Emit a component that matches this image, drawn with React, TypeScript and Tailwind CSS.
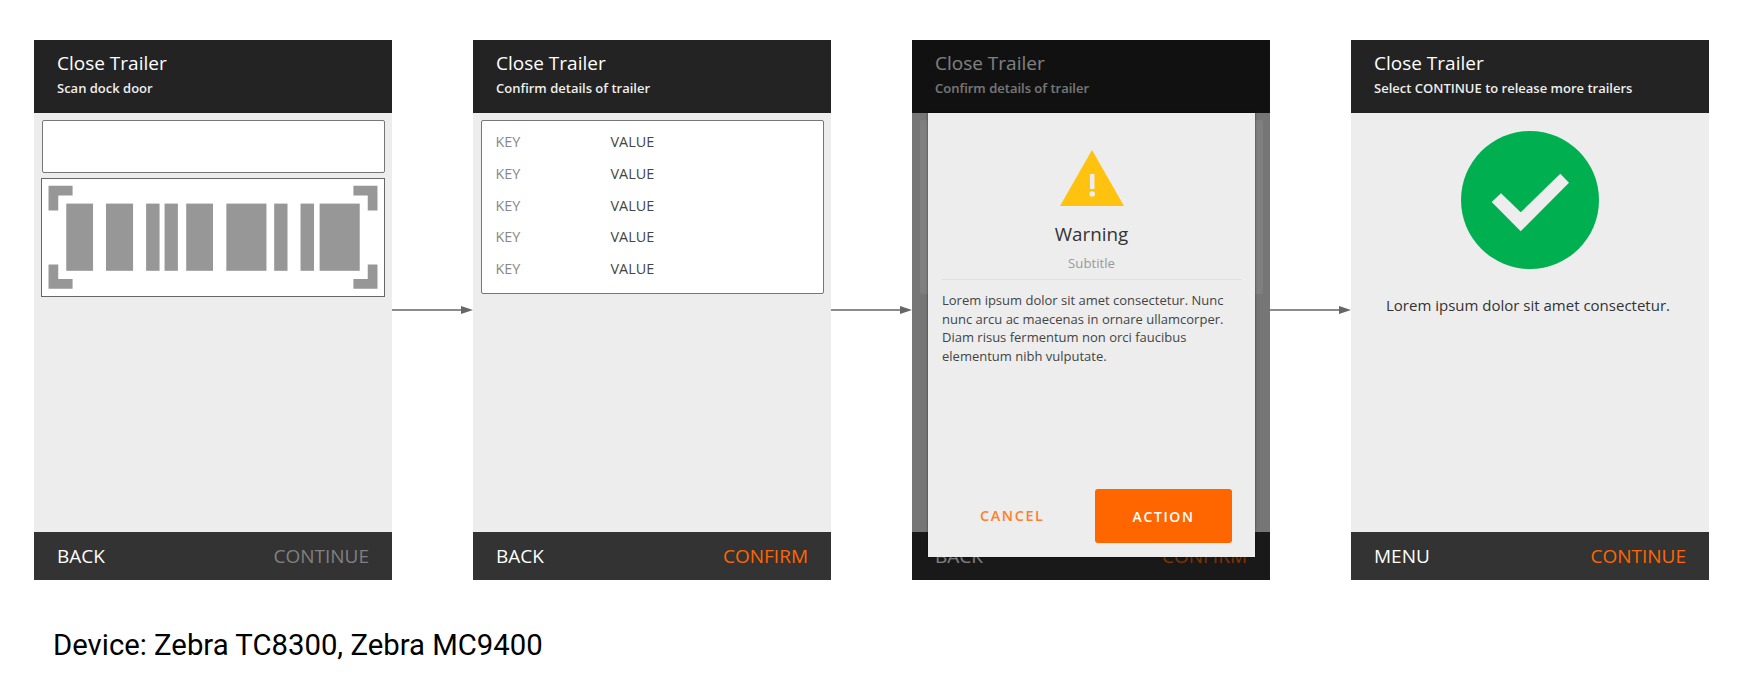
import type { ReactNode } from "react";

function Phone({
  subtitle,
  left,
  right,
  rightClass,
  children,
}: {
  subtitle: string;
  left: string;
  right: string;
  rightClass: string;
  children?: ReactNode;
}) {
  return (
    <div className="relative flex h-[540px] w-[358px] shrink-0 flex-col bg-[#ededed] font-['Open_Sans',sans-serif]">
      <div className="flex h-[73px] shrink-0 flex-col bg-[#232323] pl-[23px] text-white">
        <div className="mt-[10px] text-[19px] font-medium leading-[26px]">Close Trailer</div>
        <div className="mt-[3px] text-[13px] font-semibold leading-[18px] text-[#eeeeee]">{subtitle}</div>
      </div>
      <div className="flex min-h-0 flex-1 flex-col">{children}</div>
      <div className="flex h-[48px] shrink-0 items-center justify-between bg-[#333333] px-[23px] text-[19px] font-medium text-white">
        <span>{left}</span>
        <span className={rightClass}>{right}</span>
      </div>
    </div>
  );
}

function Arrow() {
  return (
    <svg className="mt-[265px] h-[10px] w-[81px] shrink-0" viewBox="0 0 81 10">
      <path d="M0 5H70" stroke="#666666" strokeWidth="1.5" />
      <path d="M69 1L81 5L69 9Z" fill="#666666" />
    </svg>
  );
}

function Barcode() {
  const bars = [
    [24.2, 26.7],
    [63.8, 27],
    [103.8, 13.4],
    [122.2, 13.3],
    [143.8, 26.7],
    [183.8, 40],
    [231.5, 13.3],
    [257.8, 13.4],
    [276.8, 40],
  ];
  return (
    <svg className="h-full w-full" viewBox="0 0 341 116">
      {bars.map(([x, w]) => (
        <rect key={x} x={x} y={24.2} width={w} height={67} fill="#979797" />
      ))}
      <path d="M6.5 6.5H30.5V16.2H16.2V31.2H6.5Z" fill="#979797" />
      <path d="M334.5 6.5H310.5V16.2H324.8V31.2H334.5Z" fill="#979797" />
      <path d="M6.5 109.2H30.5V99.5H16.2V84.8H6.5Z" fill="#979797" />
      <path d="M334.5 109.2H310.5V99.5H324.8V84.8H334.5Z" fill="#979797" />
    </svg>
  );
}

function KeyList() {
  return (
    <div className="mx-[7.5px] mt-[7px] h-[174px] rounded-[2px] border-[1.5px] border-[#777777] bg-white pl-[14px] pt-[5px] text-[14.4px]">
      {[0, 1, 2, 3, 4].map((row) => (
        <div key={row} className="flex h-[31.75px] items-center">
          <span className="w-[115px] text-[#888888]">KEY</span>
          <span className="text-[#444444]">VALUE</span>
        </div>
      ))}
    </div>
  );
}

export default function App() {
  return (
    <div className="h-[689px] w-[1746px] overflow-hidden bg-white pl-[34px] pt-[40px]">
      <div className="flex">
        <Phone subtitle="Scan dock door" left="BACK" right="CONTINUE" rightClass="text-[#808080]">
          <div className="mx-[7.5px] mt-[7px] h-[53px] rounded-[2px] border-[1.5px] border-[#777777] bg-white" />
          <div className="mx-[7px] mt-[5px] h-[119px] border-[1.5px] border-[#666666] bg-white">
            <Barcode />
          </div>
        </Phone>
        <Arrow />
        <Phone subtitle="Confirm details of trailer" left="BACK" right="CONFIRM" rightClass="text-[#ff6600]">
          <KeyList />
        </Phone>
        <Arrow />
        <Phone subtitle="Confirm details of trailer" left="BACK" right="CONFIRM" rightClass="text-[#ff6600]">
          {/* the list behind the dialog only shows as a lighter strip on both sides */}
          <div className="mx-[7.5px] mt-[7px] h-[174px] rounded-[2px] bg-white" />
          <div className="absolute inset-0 bg-black/50" />
          <div className="absolute left-[16px] top-[73px] flex h-[444px] w-[327px] flex-col items-center bg-[#ededed] px-[14px] shadow-[0_0_2px_rgba(0,0,0,0.6)]">
            <svg className="mt-[37px] h-[56px] w-[64px] shrink-0" viewBox="0 0 64 56">
              <path d="M32 0L64 56H0Z" fill="#ffc20e" />
              <path d="M30 24H34.5V39H30Z" fill="#ededed" />
              <circle cx="32.2" cy="44" r="2.8" fill="#ededed" />
            </svg>
            <div className="mt-[15px] text-[18.8px] leading-[26px] text-[#333333]">Warning</div>
            <div className="mt-[7px] text-[13.2px] leading-[18px] text-[#999999]">Subtitle</div>
            <div className="mt-[7px] h-px w-full shrink-0 bg-[#e0e0e0]" />
            <p className="mt-[11px] w-full text-[13px] leading-[18.67px] text-[#444444]">
              Lorem ipsum dolor sit amet consectetur. Nunc nunc arcu ac maecenas in ornare ullamcorper. Diam risus
              fermentum non orci faucibus elementum nibh vulputate.
            </p>
            <div className="mb-[14px] mt-auto flex w-full items-center">
              <span className="ml-[38px] text-[14.4px] font-semibold tracking-[1.6px] text-[#ff7f2a]">CANCEL</span>
              <button className="ml-auto mr-[9px] flex h-[54px] w-[137px] items-center justify-center rounded-[3px] bg-[#ff6600] text-[14px] font-semibold tracking-[1.6px] text-white">
                ACTION
              </button>
            </div>
          </div>
        </Phone>
        <Arrow />
        <Phone subtitle="Select CONTINUE to release more trailers" left="MENU" right="CONTINUE" rightClass="text-[#ff6600]">
          <div className="flex flex-col items-center">
            <svg className="mt-[18px] h-[138px] w-[138px]" viewBox="0 0 138 138">
              <circle cx="69" cy="69" r="69" fill="#00b050" />
              <path d="M30.7 71L40 62.3L59.7 81.3L99.3 42.7L108 51.7L59.7 100.3Z" fill="#ededed" />
            </svg>
            <p className="mt-[26px] pr-[4px] text-[15px] leading-[20px] text-[#333333]">Lorem ipsum dolor sit amet consectetur.</p>
          </div>
        </Phone>
      </div>
      <div className="ml-[19px] mt-[47px] font-['Roboto',sans-serif] text-[29.3px] leading-[36px] text-black">
        Device: Zebra TC8300, Zebra MC9400
      </div>
    </div>
  );
}
